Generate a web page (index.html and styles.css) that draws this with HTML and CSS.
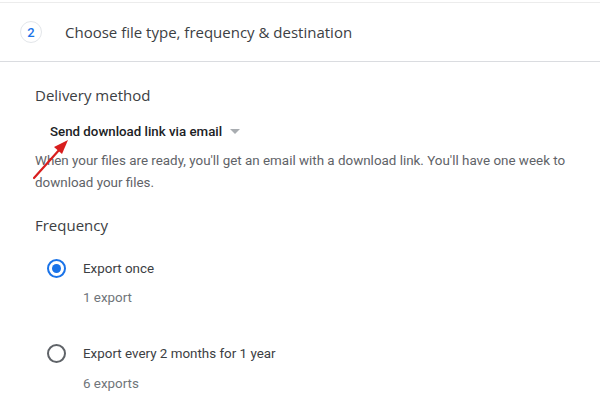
FILE: index.html
```html
<!DOCTYPE html>
<html>
<head>
<meta charset="utf-8">
<link rel="stylesheet" href="styles.css">
</head>
<body>
<div class="card">
  <div class="step-header">
    <span class="step-num">2</span>
    <span class="step-title">Choose file type, frequency &amp; destination</span>
  </div>
  <div class="step-body">
    <div class="section-title">Delivery method</div>
    <div class="dropdown">
      <span class="dropdown-label">Send download link via email</span>
      <span class="caret"></span>
    </div>
    <p class="desc">When your files are ready, you'll get an email with a download link. You'll have one week to download your files.</p>
    <div class="section-title freq">Frequency</div>
    <div class="option first">
      <span class="radio checked"></span>
      <span class="option-label">Export once</span>
    </div>
    <div class="option-sub">1 export</div>
    <div class="option second">
      <span class="radio"></span>
      <span class="option-label">Export every 2 months for 1 year</span>
    </div>
    <div class="option-sub">6 exports</div>
  </div>
</div>
<svg class="arrow" width="60" height="60" viewBox="0 0 60 60">
  <line x1="4" y1="48" x2="30" y2="19" stroke="#d81e1e" stroke-width="2.2" stroke-linecap="round"/>
  <polygon points="38,10 24,17 32,24" fill="#d81e1e"/>
</svg>
</body>
</html>
```

FILE: styles.css
```css
html, body {
  margin: 0;
  padding: 0;
  background: #ffffff;
}
body {
  font-family: Roboto, "Liberation Sans", Arial, sans-serif;
  color: #3c4043;
  width: 600px;
  height: 411px;
  overflow: hidden;
  position: relative;
}
.card {
  margin-top: 2px;
  border-top: 1px solid #ececec;
}
.step-header {
  height: 58px;
  display: flex;
  align-items: center;
  padding-left: 20px;
  border-bottom: 1px solid #dadce0;
}
.step-num {
  width: 20px;
  height: 20px;
  border: 1px solid #e3e6ea;
  border-radius: 50%;
  display: flex;
  align-items: center;
  justify-content: center;
  font-size: 13px;
  font-weight: 500;
  color: #1a73e8;
}
.step-title {
  margin-left: 23px;
  font-family: "Open Sans", Roboto, sans-serif;
  font-size: 15px;
  color: #3c4043;
}
.step-body {
  padding: 23px 0 0 35px;
}
.section-title {
  font-family: "Open Sans", Roboto, sans-serif;
  font-size: 15px;
  line-height: 20px;
  color: #3c4043;
}
.section-title.freq {
  margin-top: 21px;
}
.dropdown {
  margin-top: 16px;
  margin-left: 15px;
  display: flex;
  align-items: center;
  height: 20px;
}
.dropdown-label {
  font-size: 13.3px;
  font-weight: 500;
  color: #202124;
}
.caret {
  margin-left: 8px;
  width: 0;
  height: 0;
  border-left: 5px solid transparent;
  border-right: 5px solid transparent;
  border-top: 5px solid #a9adb1;
}
.desc {
  margin: 9px 0 0 0;
  font-size: 13.4px;
  line-height: 22px;
  color: #5f6368;
  width: 550px;
}
.option {
  display: flex;
  align-items: center;
  height: 20px;
}
.option.first {
  margin-top: 23px;
}
.option.second {
  margin-top: 35px;
}
.radio {
  box-sizing: border-box;
  width: 19px;
  height: 19px;
  border: 2px solid #5f6368;
  border-radius: 50%;
  margin-left: 12px;
  position: relative;
}
.radio.checked {
  border-color: #1a73e8;
}
.radio.checked::after {
  content: "";
  position: absolute;
  left: 3px;
  top: 3px;
  width: 9px;
  height: 9px;
  border-radius: 50%;
  background: #1a73e8;
}
.option-label {
  margin-left: 17px;
  font-size: 13.4px;
  color: #3c4043;
}
.option-sub {
  margin: 10px 0 0 48px;
  font-size: 13.4px;
  line-height: 20px;
  color: #70757a;
}
.option-sub:last-child {
  margin-top: 11px;
}
.arrow {
  position: absolute;
  left: 30px;
  top: 130px;
}
```
